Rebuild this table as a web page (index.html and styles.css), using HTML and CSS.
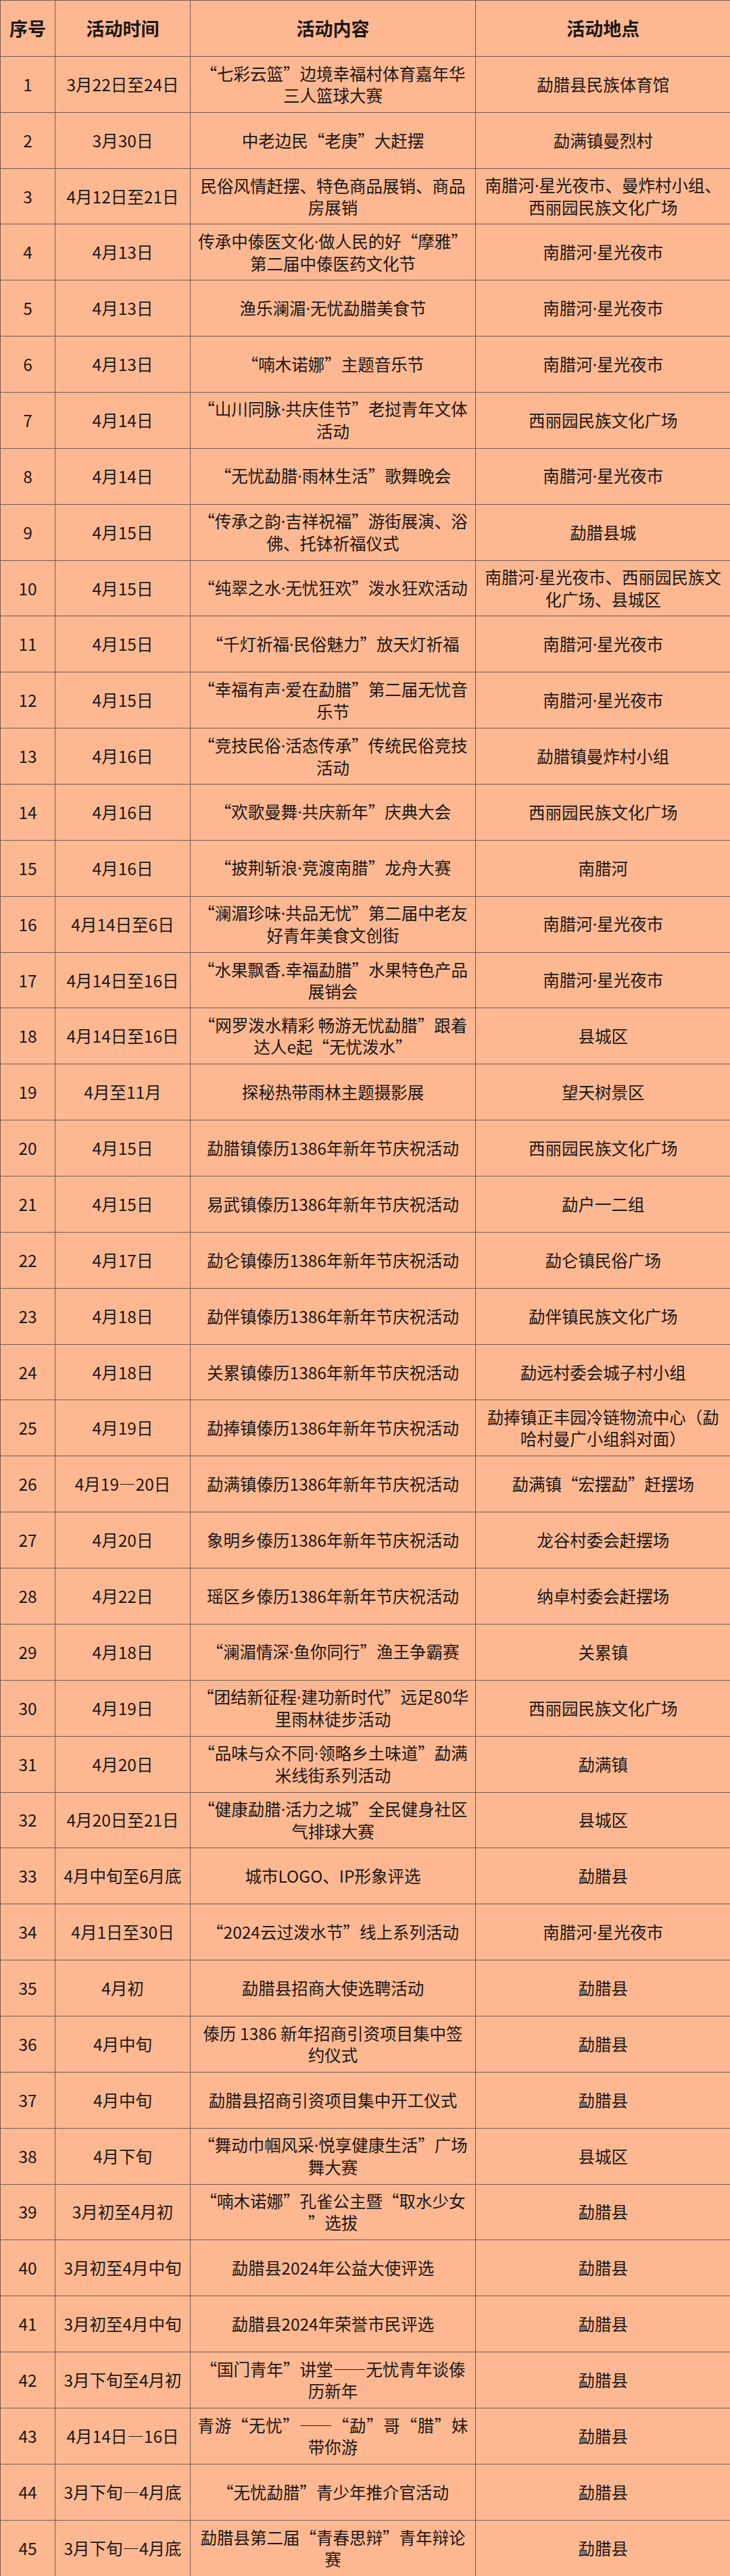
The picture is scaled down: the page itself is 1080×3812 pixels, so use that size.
FILE: index.html
```html
<!DOCTYPE html>
<html lang="zh-CN">
<head>
<meta charset="utf-8">
<title>活动安排表</title>
<link rel="stylesheet" href="styles.css">
</head>
<body>
<table class="schedule">
  <colgroup>
    <col class="c-no">
    <col class="c-time">
    <col class="c-content">
    <col class="c-place">
  </colgroup>
  <thead>
    <tr><th>序号</th><th>活动时间</th><th>活动内容</th><th>活动地点</th></tr>
  </thead>
  <tbody>
    <tr><td>1</td><td>3月22日至24日</td><td>“七彩云篮”边境幸福村体育嘉年华<br>三人篮球大赛</td><td>勐腊县民族体育馆</td></tr>
    <tr><td>2</td><td>3月30日</td><td>中老边民“老庚”大赶摆</td><td>勐满镇曼烈村</td></tr>
    <tr><td>3</td><td>4月12日至21日</td><td>民俗风情赶摆、特色商品展销、商品<br>房展销</td><td>南腊河<span class="dot">·</span>星光夜市、曼炸村小组、<br>西丽园民族文化广场</td></tr>
    <tr><td>4</td><td>4月13日</td><td>传承中傣医文化<span class="dot">·</span>做人民的好“摩雅”<br>第二届中傣医药文化节</td><td>南腊河<span class="dot">·</span>星光夜市</td></tr>
    <tr><td>5</td><td>4月13日</td><td>渔乐澜湄<span class="dot">·</span>无忧勐腊美食节</td><td>南腊河<span class="dot">·</span>星光夜市</td></tr>
    <tr><td>6</td><td>4月13日</td><td>“喃木诺娜”主题音乐节</td><td>南腊河<span class="dot">·</span>星光夜市</td></tr>
    <tr><td>7</td><td>4月14日</td><td>“山川同脉<span class="dot">·</span>共庆佳节”老挝青年文体<br>活动</td><td>西丽园民族文化广场</td></tr>
    <tr><td>8</td><td>4月14日</td><td>“无忧勐腊<span class="dot">·</span>雨林生活”歌舞晚会</td><td>南腊河<span class="dot">·</span>星光夜市</td></tr>
    <tr><td>9</td><td>4月15日</td><td>“传承之韵<span class="dot">·</span>吉祥祝福”游街展演、浴<br>佛、托钵祈福仪式</td><td>勐腊县城</td></tr>
    <tr><td>10</td><td>4月15日</td><td>“纯翠之水<span class="dot">·</span>无忧狂欢”泼水狂欢活动</td><td>南腊河<span class="dot">·</span>星光夜市、西丽园民族文<br>化广场、县城区</td></tr>
    <tr><td>11</td><td>4月15日</td><td>“千灯祈福<span class="dot">·</span>民俗魅力”放天灯祈福</td><td>南腊河<span class="dot">·</span>星光夜市</td></tr>
    <tr><td>12</td><td>4月15日</td><td>“幸福有声<span class="dot">·</span>爱在勐腊”第二届无忧音<br>乐节</td><td>南腊河<span class="dot">·</span>星光夜市</td></tr>
    <tr><td>13</td><td>4月16日</td><td>“竞技民俗<span class="dot">·</span>活态传承”传统民俗竞技<br>活动</td><td>勐腊镇曼炸村小组</td></tr>
    <tr><td>14</td><td>4月16日</td><td>“欢歌曼舞<span class="dot">·</span>共庆新年”庆典大会</td><td>西丽园民族文化广场</td></tr>
    <tr><td>15</td><td>4月16日</td><td>“披荆斩浪<span class="dot">·</span>竞渡南腊”龙舟大赛</td><td>南腊河</td></tr>
    <tr><td>16</td><td>4月14日至6日</td><td>“澜湄珍味<span class="dot">·</span>共品无忧”第二届中老友<br>好青年美食文创街</td><td>南腊河<span class="dot">·</span>星光夜市</td></tr>
    <tr><td>17</td><td>4月14日至16日</td><td>“水果飘香.幸福勐腊”水果特色产品<br>展销会</td><td>南腊河<span class="dot">·</span>星光夜市</td></tr>
    <tr><td>18</td><td>4月14日至16日</td><td>“网罗泼水精彩 畅游无忧勐腊”跟着<br>达人e起“无忧泼水”</td><td>县城区</td></tr>
    <tr><td>19</td><td>4月至11月</td><td>探秘热带雨林主题摄影展</td><td>望天树景区</td></tr>
    <tr><td>20</td><td>4月15日</td><td>勐腊镇傣历1386年新年节庆祝活动</td><td>西丽园民族文化广场</td></tr>
    <tr><td>21</td><td>4月15日</td><td>易武镇傣历1386年新年节庆祝活动</td><td>勐户一二组</td></tr>
    <tr><td>22</td><td>4月17日</td><td>勐仑镇傣历1386年新年节庆祝活动</td><td>勐仑镇民俗广场</td></tr>
    <tr><td>23</td><td>4月18日</td><td>勐伴镇傣历1386年新年节庆祝活动</td><td>勐伴镇民族文化广场</td></tr>
    <tr><td>24</td><td>4月18日</td><td>关累镇傣历1386年新年节庆祝活动</td><td>勐远村委会城子村小组</td></tr>
    <tr><td>25</td><td>4月19日</td><td>勐捧镇傣历1386年新年节庆祝活动</td><td>勐捧镇正丰园冷链物流中心（勐<br>哈村曼广小组斜对面）</td></tr>
    <tr><td>26</td><td>4月19—20日</td><td>勐满镇傣历1386年新年节庆祝活动</td><td>勐满镇“宏摆勐”赶摆场</td></tr>
    <tr><td>27</td><td>4月20日</td><td>象明乡傣历1386年新年节庆祝活动</td><td>龙谷村委会赶摆场</td></tr>
    <tr><td>28</td><td>4月22日</td><td>瑶区乡傣历1386年新年节庆祝活动</td><td>纳卓村委会赶摆场</td></tr>
    <tr><td>29</td><td>4月18日</td><td>“澜湄情深<span class="dot">·</span>鱼你同行”渔王争霸赛</td><td>关累镇</td></tr>
    <tr><td>30</td><td>4月19日</td><td>“团结新征程<span class="dot">·</span>建功新时代”远足80华<br>里雨林徒步活动</td><td>西丽园民族文化广场</td></tr>
    <tr><td>31</td><td>4月20日</td><td>“品味与众不同<span class="dot">·</span>领略乡土味道”勐满<br>米线街系列活动</td><td>勐满镇</td></tr>
    <tr><td>32</td><td>4月20日至21日</td><td>“健康勐腊<span class="dot">·</span>活力之城”全民健身社区<br>气排球大赛</td><td>县城区</td></tr>
    <tr><td>33</td><td>4月中旬至6月底</td><td>城市LOGO、IP形象评选</td><td>勐腊县</td></tr>
    <tr><td>34</td><td>4月1日至30日</td><td>“2024云过泼水节”线上系列活动</td><td>南腊河<span class="dot">·</span>星光夜市</td></tr>
    <tr><td>35</td><td>4月初</td><td>勐腊县招商大使选聘活动</td><td>勐腊县</td></tr>
    <tr><td>36</td><td>4月中旬</td><td>傣历 1386 新年招商引资项目集中签<br>约仪式</td><td>勐腊县</td></tr>
    <tr><td>37</td><td>4月中旬</td><td>勐腊县招商引资项目集中开工仪式</td><td>勐腊县</td></tr>
    <tr><td>38</td><td>4月下旬</td><td>“舞动巾帼风采<span class="dot">·</span>悦享健康生活”广场<br>舞大赛</td><td>县城区</td></tr>
    <tr><td>39</td><td>3月初至4月初</td><td>“喃木诺娜”孔雀公主暨“取水少女<br>”选拔</td><td>勐腊县</td></tr>
    <tr><td>40</td><td>3月初至4月中旬</td><td>勐腊县2024年公益大使评选</td><td>勐腊县</td></tr>
    <tr><td>41</td><td>3月初至4月中旬</td><td>勐腊县2024年荣誉市民评选</td><td>勐腊县</td></tr>
    <tr><td>42</td><td>3月下旬至4月初</td><td>“国门青年”讲堂——无忧青年谈傣<br>历新年</td><td>勐腊县</td></tr>
    <tr><td>43</td><td>4月14日—16日</td><td><span class="just">青游“无忧”——“勐”哥“腊”妹</span>带你游</td><td>勐腊县</td></tr>
    <tr><td>44</td><td>3月下旬—4月底</td><td>“无忧勐腊”青少年推介官活动</td><td>勐腊县</td></tr>
    <tr><td>45</td><td>3月下旬—4月底</td><td>勐腊县第二届“青春思辩”青年辩论<br>赛</td><td>勐腊县</td></tr>
  </tbody>
</table>
</body>
</html>
```

FILE: styles.css
```css
html, body {
  margin: 0;
  padding: 0;
  background: #feb891;
}

.schedule {
  width: 1080px;
  table-layout: fixed;
  border-collapse: collapse;
  border-spacing: 0;
  background: #feb891;
  font-family: "Noto Sans CJK SC", "Noto Sans", sans-serif;
  color: #1b1715;
}

.c-no { width: 81px; }
.c-time { width: 200px; }
.c-content { width: 422px; }
.c-place { width: 377px; }

.schedule tr {
  height: 82.87px;
}

.schedule th,
.schedule td {
  border: 1px solid #6d5c52;
  padding: 0 10px;
  text-align: center;
  vertical-align: middle;
  white-space: nowrap;
  font-size: 24.5px;
  line-height: 32px;
  font-weight: 400;
}

.schedule th {
  font-size: 27px;
  font-weight: 700;
}

.schedule th:first-child,
.schedule td:first-child,
.schedule th:nth-child(2),
.schedule td:nth-child(2) {
  padding: 0;
}

.schedule th:last-child,
.schedule td:last-child {
  border-right: none;
}

.dot {
  font-family: "Noto Sans", "DejaVu Sans", sans-serif;
}

.just {
  display: block;
  width: 400px;
  margin: 0 auto;
  text-align: justify;
  text-align-last: justify;
}
```
